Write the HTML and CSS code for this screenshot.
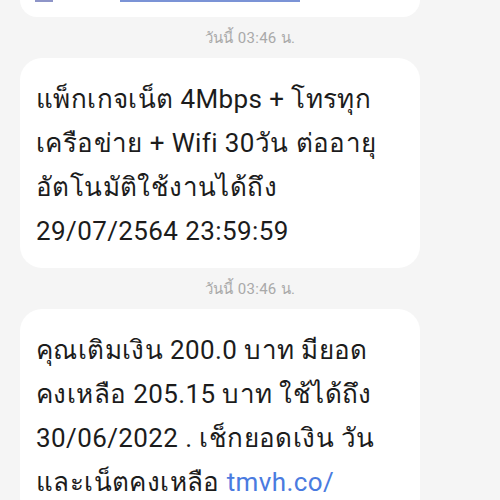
FILE: index.html
```html
<!DOCTYPE html>
<html lang="th">
<head>
    <meta charset="UTF-8">
    <meta name="viewport" content="width=device-width, initial-scale=1.0">
    <title>ข้อความ</title>
    <link rel="stylesheet" href="styles.css">
</head>
<body>

<div class="thread">
    <div class="bubble bubble-cut">
        <span class="mark"></span>
        <span class="link-line"></span>
    </div>

    <div class="time">วันนี้ 03:46 น.</div>

    <div class="bubble">
        แพ็กเกจเน็ต 4Mbps + โทรทุก<br>
        เครือข่าย + Wifi 30วัน ต่ออายุ<br>
        อัตโนมัติใช้งานได้ถึง<br>
        29/07/2564 23:59:59
    </div>

    <div class="time">วันนี้ 03:46 น.</div>

    <div class="bubble">
        คุณเติมเงิน 200.0 บาท มียอด<br>
        คงเหลือ 205.15 บาท ใช้ได้ถึง<br>
        30/06/2022 . เช็กยอดเงิน วัน<br>
        และเน็ตคงเหลือ <a class="link" href="#">tmvh.co/</a>
    </div>
</div>

</body>
</html>
```

FILE: styles.css
```css
* {
    box-sizing: border-box;
    margin: 0;
    padding: 0;
}
body {
    font-family: 'Roboto', 'Noto Sans', sans-serif;
    background: #f5f5f5;
    color: #1c1c1c;
    width: 500px;
    height: 500px;
    overflow: hidden;
}
.thread {
    display: flex;
    flex-direction: column;
}
.bubble {
    background: #fff;
    border-radius: 22px;
    margin: 0 80px 0 20px;
    padding: 19px 16px 15px 16px;
    font-size: 26px;
    line-height: 44px;
    letter-spacing: 0.4px;
}
.bubble-cut {
    height: 17px;
    padding: 0;
    border-radius: 0 0 22px 22px;
    display: flex;
    align-items: flex-start;
}
.mark {
    width: 18px;
    height: 2px;
    background: #8e95c8;
    margin-left: 15px;
}
.link-line {
    width: 180px;
    height: 2px;
    background: #7b93d6;
    margin-left: 67px;
}
.time {
    text-align: center;
    font-size: 15px;
    line-height: 20px;
    letter-spacing: 0.3px;
    color: #a9a9a9;
    padding: 11px 0 10px 0;
}
.link {
    color: #4a7be0;
    text-decoration: none;
}
```
